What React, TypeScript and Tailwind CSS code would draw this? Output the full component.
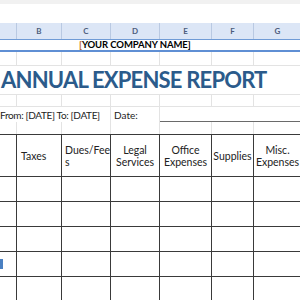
import React from "react";

const COLS = "grid grid-cols-[17px_45px_49px_49px_52px_42px_48px]";
const LETTERS = ["", "B", "C", "D", "E", "F", "G"];
const HEADS = ["", "Taxes", "Dues/Fee s", "Legal Services", "Office Expenses", "Supplies", "Misc. Expenses"];

const font = { fontFamily: "Lato, 'Open Sans', sans-serif" };

function GridRow({ h }: { h: string }) {
  return (
    <div className={`${COLS} ${h} border-b border-[#e3e3e3]`}>
      {LETTERS.map((l, i) => (
        <div key={i} className="border-r border-[#e3e3e3]" />
      ))}
    </div>
  );
}

export default function App() {
  return (
    <div className="w-[300px] h-[300px] overflow-hidden bg-white" style={font}>
      <div className="w-[302px]">
        {/* top strip */}
        <div className="h-[4px] bg-[#f1f1f1]" />
        <div className="h-[19px] bg-white" />

        {/* column letters */}
        <div className={`${COLS} h-[17px] bg-[#dce6f6] border-b border-[#6f9bd6]`}>
          {LETTERS.map((l) => (
            <div
              key={l}
              className="border-r border-[#b9c9e2] flex items-center justify-center text-[8px] font-bold text-[#4d5d7c]"
            >
              {l}
            </div>
          ))}
        </div>

        {/* company name - selected merged cell */}
        <div className="h-[12px] border-b-2 border-[#5f8fd4] flex items-center pl-[79px] text-[9.5px] font-bold text-black leading-none tracking-[-0.1px]">
          <span className="text-[#b8641f]">[</span>YOUR COMPANY NAME]
        </div>

        <GridRow h="h-[14px]" />

        {/* title */}
        <div className="h-[29px] border-b border-[#e3e3e3] flex items-center pl-[1px] text-[22px] font-bold text-[#2b5b8b] leading-none tracking-[-0.8px] whitespace-nowrap">
          ANNUAL EXPENSE REPORT
        </div>

        <GridRow h="h-[12px]" />

        {/* period row */}
        <div className={`${COLS} h-[15px] text-[10px] text-[#222] leading-none`}>
          <div className="col-span-3 flex items-center whitespace-nowrap tracking-[-0.35px] border-r border-[#e3e3e3]">
            From: [DATE] To: [DATE]
          </div>
          <div className="flex items-center pl-[3px] border-r border-[#e3e3e3]">Date:</div>
          <div className="col-span-3 border-b border-[#6a6a6a]" />
        </div>

        <div className={`${COLS} h-[12px]`}>
          {LETTERS.map((l, i) => (
            <div key={i} className="border-r border-[#e3e3e3]" />
          ))}
        </div>

        {/* table */}
        <div className="border-t border-[#3a3a3a]">
          <div className={`${COLS} h-[42px] border-b border-[#3a3a3a] text-[10.5px] text-[#222] leading-[12px]`}>
            {HEADS.map((t, i) => (
              <div
                key={i}
                className={`border-r border-[#3a3a3a] flex items-center ${
                  i === 1 || i === 2 ? "justify-start pl-[3px]" : "justify-center text-center"
                }`}
              >
                {i === 2 ? (
                  <span>
                    Dues/Fee
                    <br />s
                  </span>
                ) : (
                  <span className="px-[1px]">{t}</span>
                )}
              </div>
            ))}
          </div>
          {[0, 1, 2, 3, 4].map((r) => (
            <div key={r} className={`${COLS} h-[25px] border-b border-[#3a3a3a]`}>
              {LETTERS.map((l, i) => (
                <div key={i} className="border-r border-[#3a3a3a] flex items-center">
                  {r === 3 && i === 0 && <div className="w-[3px] h-[10px] bg-[#4a80c2]" />}
                </div>
              ))}
            </div>
          ))}
        </div>
      </div>
    </div>
  );
}
